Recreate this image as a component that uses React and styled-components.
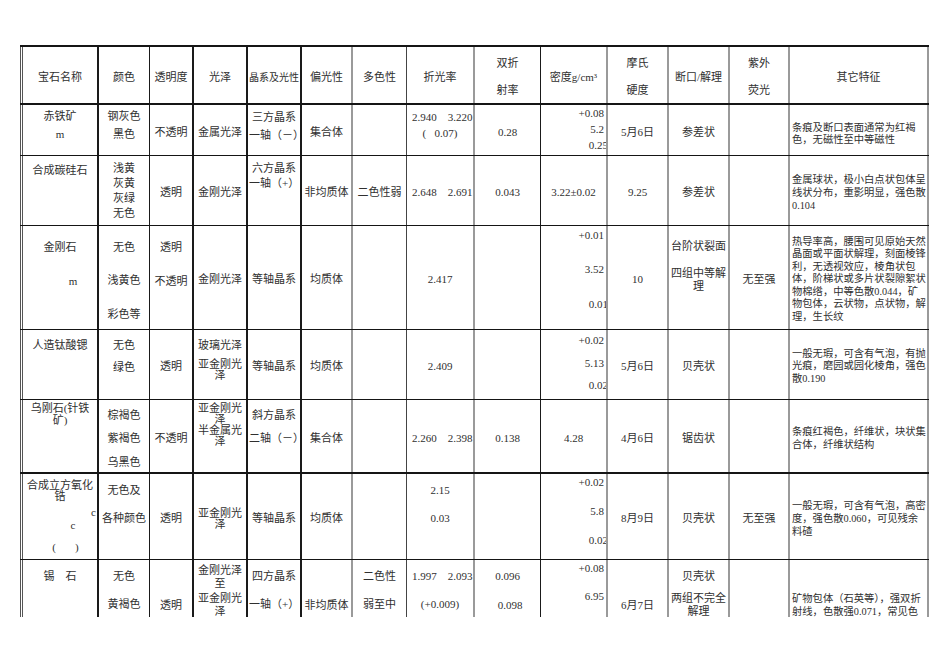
import React from 'react';
import styled, { createGlobalStyle } from 'styled-components';

const GlobalStyle = createGlobalStyle`
  html, body {
    margin: 0;
    background: #fff;
  }
  body {
    font-family: "Liberation Serif", "Noto Sans CJK SC", serif;
    color: #303030;
  }
`;

const COLS = [77, 52, 43, 54, 54, 51, 55, 67, 67, 66, 61, 61, 60, 141];

const RULE = {
  edge: '3px double #555',
  strong: '2px solid #1a1a1a',
  dark: '1px solid #1a1a1a',
  mid: '1px solid #444',
  soft: '2px solid #9a9a9a',
};

const COL_RULES = ['edge', 'strong', 'dark', 'strong', 'strong', 'strong', 'soft', 'mid', 'soft', 'dark', 'soft', 'soft', 'soft', 'soft'];

const Sheet = styled.div`
  margin: 45px 0 0 20px;
  width: ${COLS.reduce((a, b) => a + b, 0)}px;
  height: 572px;
  overflow: hidden;
`;

const Row = styled.div`
  display: grid;
  grid-template-columns: ${COLS.map(w => w + 'px').join(' ')};
  height: ${p => p.$h}px;
  box-sizing: border-box;
  border-top: ${p => p.$top}px solid #151515;
`;

const Cell = styled.div`
  box-sizing: border-box;
  min-width: 0;
  display: flex;
  flex-direction: column;
  justify-content: ${p => (p.$pt == null ? 'center' : 'flex-start')};
  gap: ${p => p.$gap || 0}px;
  padding-top: ${p => (p.$pt == null ? 4 : p.$pt)}px;
  padding-right: ${p => (p.$align === 'right' ? 2 : 1)}px;
  padding-left: ${p => (p.$align === 'left' ? 2 : 1)}px;
  border-left: ${p => RULE[p.$rule]};
  border-right: ${p => (p.$last ? RULE.soft : 'none')};
  text-align: ${p => p.$align || 'center'};
  font-size: ${p => p.$fs || 11}px;
  line-height: ${p => p.$lh || 13}px;
`;

const Line = styled.div`
  white-space: pre;
  text-align: ${p => p.$align || 'inherit'};
  padding-left: ${p => p.$pl || 0}px;
  margin-right: ${p => p.$mr || 0}px;
  margin-top: ${p => p.$mt || 0}px;
`;

const note = (t, extra = {}) => ({ l: [t], al: 'left', fs: 10.3, lh: 12.5, ...extra });
const dens = (a, b, c, pt, gap, lh = 13) => ({
  l: c ? [a, b, { t: c, mr: -4 }] : [a, b],
  al: 'right',
  pt,
  gap,
  lh,
});

const ROWS = [
  {
    h: 58, top: 2,
    cells: [
      '宝石名称', '颜色', '透明度', '光泽', { l: ['晶系及光性'], fs: 10 }, '偏光性', '多色性', '折光率',
      { l: ['双折', '射率'], gap: 14 }, '密度g/cm³', { l: ['摩氏', '硬度'], gap: 14 }, '断口/解理',
      { l: ['紫外', '荧光'], gap: 14 }, '其它特征',
    ],
  },
  {
    h: 52, top: 2,
    cells: [
      { l: ['赤铁矿', 'm'], pt: 5, gap: 4.6 },
      { l: ['钢灰色', '黑色'], pt: 5, gap: 4.6 },
      '不透明', '金属光泽',
      { l: ['三方晶系', '一轴（－）'], pt: 6, gap: 5 },
      '集合体', '',
      { l: [{ t: '2.940    3.220', pl: 4 }, '(   0.07)'], pt: 6, gap: 2.6 },
      '0.28',
      dens('+0.08', '5.2', '0.25', 2, 3),
      '5月6日', '参差状', '',
      note('条痕及断口表面通常为红褐\n色，无磁性至中等磁性', { pt: 17, lh: 12 }),
    ],
  },
  {
    h: 70, top: 1,
    cells: [
      { l: ['合成碳硅石'], pt: 7.5 },
      { l: ['浅黄', '灰黄', '灰绿', '无色'], pt: 5.5, gap: 2 },
      '透明', '金刚光泽',
      { l: ['六方晶系', '一轴（+）'], pt: 5.5, gap: 2 },
      '非均质体', '二色性弱', { t: '', l: [{ t: '2.648    2.691', pl: 4 }] }, '0.043', '3.22±0.02', '9.25', '参差状', '',
      note('金属球状，极小白点状包体呈\n线状分布，重影明显，强色散\n0.104', { lh: 13.3 }),
    ],
  },
  {
    h: 104, top: 1,
    cells: [
      { l: ['金刚石', { t: 'm', pl: 26 }], pt: 14.5, gap: 21 },
      { l: ['无色', '浅黄色', '彩色等'], pt: 14.5, gap: 20.5 },
      { l: ['透明', '不透明'], pt: 14.5, gap: 21 },
      '金刚光泽', '等轴晶系', '均质体', '', '2.417', '',
      dens('+0.01', '3.52', '0.01', 2.5, 21.5),
      '10',
      { l: ['台阶状裂面', '四组中等解\n理'], pt: 14, gap: 14 },
      '无至强',
      note('热导率高，腰围可见原始天然\n晶面或平面状解理，刻面棱锋\n利，无透视效应，棱角状包\n体，阶梯状或多片状裂隙絮状\n物棉绺，中等色散0.044，矿\n物包体，云状物，点状物，解\n理，生长纹'),
    ],
  },
  {
    h: 70, top: 1,
    cells: [
      { l: ['人造钛酸锶'], pt: 9, lh: 12 },
      { l: ['无色', '绿色'], pt: 9, gap: 9.7, lh: 12 },
      '透明',
      { l: ['玻璃光泽', '亚金刚光\n泽'], pt: 9.5, gap: 8.3, lh: 11 },
      '等轴晶系', '均质体', '', '2.409', '',
      dens('+0.02', '5.13', '0.02', 4, 10.7, 12),
      '5月6日', '贝壳状', '',
      note('一般无瑕，可含有气泡，有抛\n光痕，磨园或园化棱角，强色\n散0.190'),
    ],
  },
  {
    h: 73, top: 1,
    cells: [
      { l: ['乌刚石(针铁\n矿)'], pt: 2, lh: 12 },
      { l: ['棕褐色', '紫褐色', '乌黑色'], pt: 9, gap: 11.3, lh: 12 },
      '不透明',
      { l: ['亚金刚光\n泽\n半金属光\n泽'], pt: 2.5, lh: 11 },
      { l: ['斜方晶系', '二轴（－）'], pt: 9, gap: 11.3, lh: 12 },
      '集合体', '', { l: [{ t: '2.260    2.398', pl: 4 }] }, '0.138', '4.28', '4月6日', '锯齿状', '',
      note('条痕红褐色，纤维状，块状集\n合体，纤维状结构', { lh: 13 }),
    ],
  },
  {
    h: 87, top: 2,
    cells: [
      {
        l: ['合成立方氧化\n锆', { t: 'c', al: 'right', mt: 5.7 }, { t: 'c', pl: 26, mt: 2.3 }, { t: '(       )', pl: 11, mt: 10.3 }],
        pt: 5.5, lh: 11,
      },
      { l: ['无色及', '各种颜色'], pt: 9.5, gap: 15.3 },
      '透明',
      { l: ['亚金刚光\n泽'], lh: 11 },
      '等轴晶系', '均质体', '',
      { l: ['2.15', '0.03'], pt: 9.5, gap: 15.3 },
      '',
      dens('+0.02', '5.8', '0.02', 2.2, 16),
      '8月9日', '贝壳状', '无至强',
      note('一般无瑕，可含有气泡，高密\n度，强色散0.060，可见残余\n料碴', { lh: 13 }),
    ],
  },
  {
    h: 100, top: 1,
    cells: [
      { l: ['锡　石'], pt: 10 },
      { l: ['无色', '黄褐色'], pt: 10, gap: 15.3 },
      { l: ['透明'], pt: 38.5 },
      { l: ['金刚光泽\n至', '亚金刚光\n泽'], pt: 3.5, gap: 2.3 },
      { l: ['四方晶系', '一轴（+）'], pt: 10, gap: 15.3 },
      { l: ['非均质体'], pt: 38.5 },
      { l: ['二色性', '弱至中'], pt: 10, gap: 15.3 },
      { l: [{ t: '1.997    2.093', pl: 4 }, '(+0.009)'], pt: 10, gap: 15.3 },
      { l: ['0.096', { t: '0.098', pl: 5 }], pt: 9.5, gap: 16 },
      dens('+0.08', '6.95', null, 1.8, 15.4),
      { l: ['6月7日'], pt: 38.5 },
      { l: ['贝壳状', '两组不完全\n解理'], pt: 10, gap: 8.8 },
      '',
      note('矿物包体（石英等），强双折\n射线，色散强0.071，常见色\n带', { pt: 31.6, lh: 13.4 }),
    ],
  },
];

const toSpec = c => (typeof c === 'string' ? { l: c ? [c] : [] } : c);

const GemCell = ({ spec, index }) => {
  const s = toSpec(spec);
  return (
    <Cell
      $rule={COL_RULES[index]}
      $last={index === COLS.length - 1}
      $pt={s.pt}
      $gap={s.gap}
      $lh={s.lh}
      $fs={s.fs}
      $align={s.al}
    >
      {s.l.map((item, i) => {
        const it = typeof item === 'string' ? { t: item } : item;
        return (
          <Line key={i} $align={it.al} $pl={it.pl} $mr={it.mr} $mt={it.mt}>
            {it.t}
          </Line>
        );
      })}
    </Cell>
  );
};

export default function App() {
  return (
    <>
      <GlobalStyle />
      <Sheet>
        {ROWS.map((row, r) => (
          <Row key={r} $h={row.h} $top={row.top}>
            {row.cells.map((c, i) => (
              <GemCell key={i} spec={c} index={i} />
            ))}
          </Row>
        ))}
      </Sheet>
    </>
  );
}
